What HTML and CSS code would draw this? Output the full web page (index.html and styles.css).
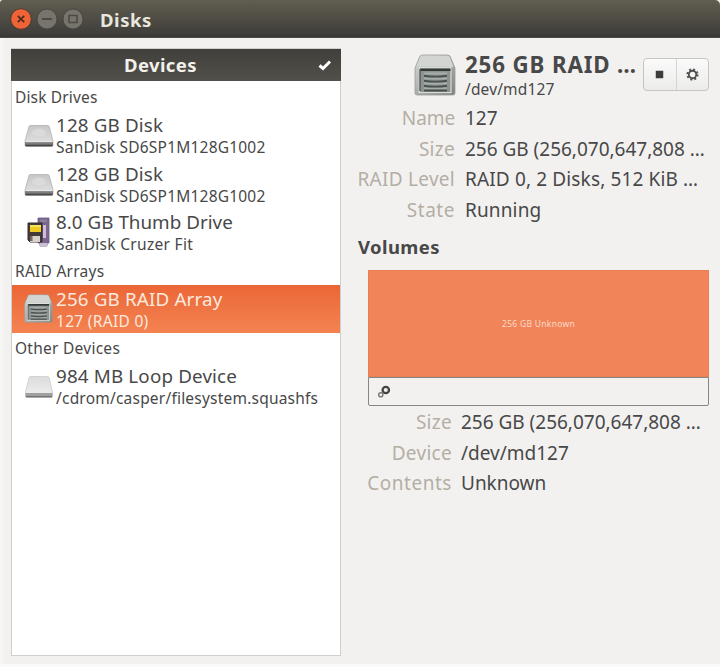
FILE: index.html
```html
<!DOCTYPE html>
<html lang="en">
<head>
<meta charset="utf-8">
<title>Disks</title>
<link rel="stylesheet" href="styles.css">
</head>
<body>
<svg class="defs" width="0" height="0" aria-hidden="true">
  <defs>
    <linearGradient id="metal" x1="0" y1="0" x2="0" y2="1"><stop offset="0" stop-color="#c6c6c6"/><stop offset="1" stop-color="#e4e4e4"/></linearGradient>
    <linearGradient id="pale" x1="0" y1="0" x2="0" y2="1"><stop offset="0" stop-color="#dcdcdc"/><stop offset="1" stop-color="#efefef"/></linearGradient>
    <linearGradient id="case" x1="0" y1="0" x2="1" y2="1"><stop offset="0" stop-color="#d9dbd8"/><stop offset="1" stop-color="#7e817d"/></linearGradient>
    <symbol id="disk" viewBox="0 0 30 24">
      <path d="M5 2.500Q5.300 1.500 6.500 1.500H23.500Q24.800 1.500 25.200 2.500L29 17V21Q29 22.300 27.500 22.300H2.500Q1 22.300 1 21V17Z" fill="url(#metal)" stroke="#a9a9a9" stroke-width=".7"/>
      <ellipse cx="15" cy="9" rx="7.500" ry="4.500" fill="#dadada" stroke="#cecece" stroke-width=".6"/>
      <path d="M1 18H29V21Q29 22.300 27.500 22.300H2.500Q1 22.300 1 21Z" fill="#7d7d7d"/>
      <path d="M1.500 21.500H28.500" stroke="#484848" stroke-width="1.700"/>
      <path d="M1.500 17.700H28.500" stroke="#eee" stroke-width=".8"/>
    </symbol>
    <symbol id="loop" viewBox="0 0 30 24">
      <path d="M5 2.500Q5.300 1.500 6.500 1.500H23.500Q24.800 1.500 25.200 2.500L28.500 17V21Q28.500 22.300 27 22.300H3Q1.500 22.300 1.500 21V17Z" fill="url(#pale)" stroke="#c9c9c9" stroke-width=".7"/>
      <path d="M1.500 18H28.500V21Q28.500 22.300 27 22.300H3Q1.500 22.300 1.500 21Z" fill="#a0a0a0"/>
      <path d="M2 21.700H28" stroke="#707070" stroke-width="1.300"/>
    </symbol>
    <symbol id="raid" viewBox="0 0 42 42">
      <path d="M6 2Q7 1 9 1H33Q35 1 36 2L41 14V39Q41 41 39 41H3Q1 41 1 39V14Z" fill="url(#case)" stroke="#9b9d99" stroke-width=".8"/>
      <path d="M6.500 2.500Q7.500 1.700 9 1.700H33Q34.500 1.700 35.500 2.500L39.500 13H2.500Z" fill="#d3d5d2"/>
      <path d="M4.500 13H37.500V39H4.500Z" fill="#e9ebe8" stroke="#b6b8b4" stroke-width=".6"/>
      <path d="M6 14.500H36.500V38H6Z" fill="#8d9390"/>
      <path d="M6 14.500H36.500V17H6Z" fill="#353a38"/>
      <path d="M6 15V37" stroke="#555b58" stroke-width="1.500"/>
      <path d="M10 19.500H33M10 24.500H33M10 29.500H33M10 34.500H33" stroke="#a6adaa" stroke-width="2"/>
      <path d="M10 21.800Q21 23.500 33 21.800M10 26.800Q21 28.500 33 26.800M10 31.800Q21 33.500 33 31.800M10 36.500H33" stroke="#4a514f" stroke-width="1.900" fill="none"/>
    </symbol>
    <symbol id="thumb" viewBox="0 0 24 30">
      <path d="M11 1H22V26H20V29H13V26H11Z" fill="#7d6592" stroke="#6b5c7d" stroke-width=".8"/>
      <path d="M13 2.500H20V5H13Z" fill="#8b8296"/><path d="M16 8H19V21H16Z" fill="#cdbfd8"/>
      <path d="M13 26H20V29H13Z" fill="#c7bfcd"/>
      <path d="M1 6H15V25H3L1 23Z" fill="#453b36" stroke="#302c2e"/>
      <path d="M3 8H14V15H3Z" fill="#f0cb21"/><path d="M3 8H14V10H3Z" fill="#f5e35e"/>
      <path d="M3 19H13V25H3Z" fill="#d8d1cc"/><path d="M3 19H5.500V24H3Z" fill="#7b665b"/>
    </symbol>
  </defs>
</svg>
<div class="window">
  <header class="titlebar">
    <svg class="controls" viewBox="0 0 74 22">
      <circle cx="11" cy="11" r="10.300" fill="#ee6337" stroke="#5a3b2e"/><path d="M7.800 7.800l6.400 6.400m0-6.400l-6.400 6.400" stroke="#4f2b1d" stroke-width="1.700"/>
      <circle cx="37" cy="11" r="10" fill="#76746d" stroke="#484741"/><path d="M32 11h10" stroke="#4b4a45" stroke-width="2"/>
      <circle cx="63" cy="11" r="10" fill="#76746d" stroke="#484741"/><path d="M59 7.500h8v7h-8z" fill="none" stroke="#4b4a45" stroke-width="1.600"/>
    </svg>
    <h1 class="title">Disks</h1>
  </header>
  <main class="content">
    <section class="sidebar">
      <div class="side-head"><h2 class="side-title">Devices</h2>
        <svg class="check" viewBox="0 0 14 12"><path d="M1.500 6.500L5 9.500L12 2.500" fill="none" stroke="#fff" stroke-width="3"/></svg></div>
      <div class="list">
        <h3 class="group tight">Disk Drives</h3>
        <div class="row"><svg class="icon disk"><use href="#disk"/></svg><div class="text"><div class="name">128 GB Disk</div><div class="sub">SanDisk SD6SP1M128G1002</div></div></div>
        <div class="row"><svg class="icon disk"><use href="#disk"/></svg><div class="text"><div class="name">128 GB Disk</div><div class="sub">SanDisk SD6SP1M128G1002</div></div></div>
        <div class="row"><svg class="icon thumb"><use href="#thumb"/></svg><div class="text"><div class="name tight">8.0 GB Thumb Drive</div><div class="sub wide">SanDisk Cruzer Fit</div></div></div>
        <h3 class="group">RAID Arrays</h3>
        <div class="row selected"><svg class="icon raid"><use href="#raid"/></svg><div class="text"><div class="name">256 GB RAID Array</div><div class="sub wide">127 (RAID 0)</div></div></div>
        <h3 class="group">Other Devices</h3>
        <div class="row"><svg class="icon disk"><use href="#loop"/></svg><div class="text"><div class="name">984 MB Loop Device</div><div class="sub">/cdrom/casper/filesystem.squashfs</div></div></div>
      </div>
    </section>
    <section class="details">
      <div class="summary">
        <svg class="big-icon"><use href="#raid"/></svg>
        <div class="heading"><h2 class="drive">256 GB RAID …</h2><div class="path">/dev/md127</div></div>
        <div class="buttons">
          <button class="btn" aria-label="Stop"><svg class="glyph" viewBox="0 0 16 16"><path d="M4 4h8v8H4z" fill="#3c3c3c"/></svg></button>
          <button class="btn" aria-label="Options"><svg class="glyph" viewBox="0 0 16 16"><circle cx="8" cy="8" r="5.500" fill="none" stroke="#555" stroke-width="2" stroke-dasharray="2.160"/><circle cx="8" cy="8" r="4" fill="none" stroke="#4b4b4b" stroke-width="1.900"/></svg></button>
        </div>
      </div>
      <dl class="props">
        <dt class="name-key">Name</dt><dd>127</dd>
        <dt>Size</dt><dd>256 GB (256,070,647,808 …</dd>
        <dt>RAID Level</dt><dd class="level">RAID 0, 2 Disks, 512 KiB …</dd>
        <dt class="loose">State</dt><dd class="level">Running</dd>
      </dl>
      <h2 class="volumes">Volumes</h2>
      <div class="volume-map"><span class="vol">256 GB Unknown</span></div>
      <div class="toolbar"><svg class="gears" viewBox="0 0 14 14"><circle cx="8.800" cy="5" r="3.200" fill="none" stroke="#454545" stroke-width="2.300"/><circle cx="3.800" cy="9.800" r="2.100" fill="none" stroke="#777" stroke-width="1.400"/></svg></div>
      <dl class="props volume-props">
        <dt>Size</dt><dd>256 GB (256,070,647,808 …</dd>
        <dt>Device</dt><dd>/dev/md127</dd>
        <dt class="loose">Contents</dt><dd>Unknown</dd>
      </dl>
    </section>
  </main>
</div>
</body>
</html>
```
FILE: styles.css
```css
* { box-sizing: border-box; margin: 0; }
body { width: 720px; height: 667px; overflow: hidden; background: #f9f9f8; color: #484848; font-family: "Noto Sans", sans-serif; }
.defs { display: block; }
.window { height: 664px; border-left: 3px solid #f6f6f5; background: #f2f1f0; }
.titlebar { display: flex; align-items: center; gap: 6px; height: 38px; margin-left: -3px; padding: 0 0 0 10px; background: linear-gradient(#615e50, #403f3b 88%, #383733); border-bottom: 1px solid #4a4943; border-radius: 3px 5px 0 0; }
.controls { width: 74px; height: 22px; }
.title { padding: 2px 0 0 10px; color: #e8e6df; font-size: 18.5px; line-height: 24px; letter-spacing: .55px; }
.content { display: flex; gap: 17px; padding: 10px 8px 8px; height: 626px; }
.sidebar { width: 330px; height: 608px; background: #fff; border: 1px solid #cfcfce; }
.side-head { display: grid; grid-template-columns: 1fr auto; align-items: center; height: 32px; margin: 0 -1px; padding-right: 9px; background: linear-gradient(#403f3b, #52504a); color: #f2f1ec; }
.side-title { font-size: 18.5px; line-height: 30px; padding-left: 113px; letter-spacing: .38px; }
.check { width: 14px; height: 12px; }
.list { padding-top: 1px; }
.group { height: 28.5px; padding-left: 3px; font-size: 15.5px; line-height: 30px; font-weight: 400; letter-spacing: .26px; }
.group.tight { letter-spacing: .15px; }
.row { display: grid; grid-template-columns: 32px 1fr; height: 48.5px; padding-left: 12px; }
.icon { align-self: center; justify-self: start; }
.disk { width: 30px; height: 24px; margin-top: 3px; }
.thumb { width: 24px; height: 30px; margin-left: 3px; }
.raid { width: 29px; height: 29px; }
.text { padding-top: 3.5px; white-space: nowrap; }
.name { font-size: 18.8px; line-height: 23px; letter-spacing: .16px; }
.name.tight { letter-spacing: .03px; }
.sub { font-size: 15.5px; line-height: 20px; letter-spacing: .21px; }
.sub.wide { letter-spacing: .3px; }
.selected { background: linear-gradient(#eb6637, #f48351); color: #fde9df; }
.details { width: 352px; }
.summary { display: flex; height: 53px; padding-left: 56px; }
.big-icon { width: 42px; height: 42px; margin: 6px 9px 0 0; }
.heading { width: 178px; white-space: nowrap; }
.drive { font-size: 22.3px; line-height: 30px; padding-top: 2px; letter-spacing: .87px; }
.path { font-size: 15.5px; line-height: 19px; letter-spacing: .15px; }
.buttons { display: flex; width: 66px; height: 33px; margin-top: 10px; border: 1px solid #c6c5c2; border-radius: 4px; background: linear-gradient(#fafafa, #ececea); }
.btn { flex: 1; padding: 0; border: 0; background: none; display: grid; place-items: center; }
.btn + .btn { border-left: 1px solid #d5d4d2; }
.glyph { width: 15px; height: 15px; }
.props { display: grid; grid-template-columns: 97px 1fr; column-gap: 10px; grid-auto-rows: 30.5px; line-height: 30px; font-size: 19px; white-space: nowrap; padding-top: 2px; letter-spacing: -.01px; }
.props dt { justify-self: end; color: #b4aea5; letter-spacing: .28px; }
.props dt.name-key { letter-spacing: -.1px; }
.props dt.loose { letter-spacing: .53px; }
.props dd.level { letter-spacing: .14px; }
.volumes { font-size: 18.5px; line-height: 26px; margin-top: 9px; letter-spacing: .4px; }
.volume-map { display: grid; place-items: center; width: 341px; height: 107px; margin: 10px 0 0 10px; background: #f18458; border: 1px solid #e98055; color: #fbdac9; font-size: 8.5px; letter-spacing: .29px; }
.toolbar { width: 341px; height: 29px; margin-left: 10px; padding: 7px 8px; border: 1px solid #858583; border-radius: 0 0 2px 2px; }
.gears { display: block; width: 14px; height: 14px; }
.volume-props { grid-template-columns: 94px 1fr; column-gap: 9px; padding-top: 1px; }
```
